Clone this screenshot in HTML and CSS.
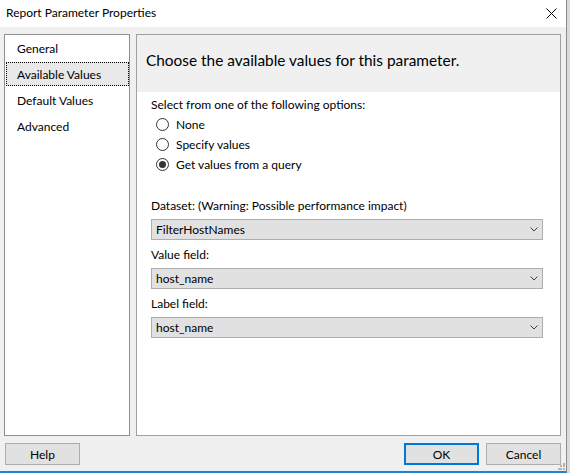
FILE: index.html
```html
<!DOCTYPE html>
<html>
<head>
<meta charset="utf-8">
<link rel="stylesheet" href="styles.css">
</head>
<body>
<div class="window">
  <div class="titlebar">
    <span class="title">Report Parameter Properties</span>
    <svg class="close" width="11" height="11" viewBox="0 0 11 11"><path d="M0.5 0.5 L10.5 10.5 M10.5 0.5 L0.5 10.5" stroke="#000" stroke-width="1" fill="none"/></svg>
  </div>
  <div class="main">
    <ul class="nav">
      <li class="nav-item">General</li>
      <li class="nav-item selected">Available Values</li>
      <li class="nav-item">Default Values</li>
      <li class="nav-item">Advanced</li>
    </ul>
    <section class="panel">
      <div class="panel-head">Choose the available values for this parameter.</div>
      <div class="panel-body">
        <div class="prompt">Select from one of the following options:</div>
        <div class="radios">
          <div class="radio"><span class="circle"></span><span>None</span></div>
          <div class="radio"><span class="circle"></span><span>Specify values</span></div>
          <div class="radio"><span class="circle checked"></span><span>Get values from a query</span></div>
        </div>
        <div class="field first">
          <div class="label">Dataset: (Warning: Possible performance impact)</div>
          <div class="select"><span>FilterHostNames</span><svg class="chev" width="8" height="5" viewBox="0 0 8 5"><path d="M0.5 0.5 L4 4 L7.5 0.5" stroke="#404040" stroke-width="1" fill="none"/></svg></div>
        </div>
        <div class="field">
          <div class="label">Value field:</div>
          <div class="select"><span>host_name</span><svg class="chev" width="8" height="5" viewBox="0 0 8 5"><path d="M0.5 0.5 L4 4 L7.5 0.5" stroke="#404040" stroke-width="1" fill="none"/></svg></div>
        </div>
        <div class="field">
          <div class="label">Label field:</div>
          <div class="select"><span>host_name</span><svg class="chev" width="8" height="5" viewBox="0 0 8 5"><path d="M0.5 0.5 L4 4 L7.5 0.5" stroke="#404040" stroke-width="1" fill="none"/></svg></div>
        </div>
      </div>
    </section>
  </div>
  <div class="buttons">
    <button class="btn">Help</button>
    <span class="spacer"></span>
    <button class="btn default">OK</button>
    <button class="btn">Cancel</button>
  </div>
  <svg class="grip" width="7" height="7" viewBox="0 0 7 7">
    <rect x="5" y="0" width="2" height="2" fill="#b5b5b5"/>
    <rect x="2" y="2" width="2" height="2" fill="#b5b5b5"/>
    <rect x="5" y="2" width="2" height="2" fill="#b5b5b5"/>
    <rect x="0" y="5" width="2" height="2" fill="#b5b5b5"/>
    <rect x="2" y="5" width="2" height="2" fill="#b5b5b5"/>
    <rect x="5" y="5" width="2" height="2" fill="#b5b5b5"/>
  </svg>
</div>
</body>
</html>
```
FILE: styles.css
```css
* { box-sizing: border-box; }
html, body {
  margin: 0;
  padding: 0;
  background: #dadada;
}
body {
  font-family: "Lato", "Open Sans", sans-serif;
  font-size: 12px;
  color: #000;
  width: 570px;
  height: 473px;
  overflow: hidden;
}
.window {
  position: relative;
  width: 567px;
  height: 473px;
  background: #f0f0f0;
  border-right: 1px solid #8c8c8c;
  border-bottom: 2px solid #1883d7;
  display: flex;
  flex-direction: column;
}
.titlebar {
  height: 27px;
  background: #fff;
  display: flex;
  align-items: center;
  padding-left: 6px;
  padding-right: 9px;
  flex-shrink: 0;
}
.title {
  flex: 1;
  font-size: 12px;
  line-height: 16px;
  padding-bottom: 1px;
}
.close { display: block; margin-bottom: 1px; }
.main {
  display: flex;
  gap: 6px;
  padding: 7px 5px 0 4px;
  height: 409px;
  flex-shrink: 0;
}
.nav {
  list-style: none;
  margin: 0;
  width: 126px;
  height: 402px;
  background: #fff;
  border: 1px solid #8f8f8f;
  padding: 1px 0 0 1px;
}
.nav-item {
  height: 24px;
  line-height: 21px;
  padding-top: 1px;
  margin-bottom: 2px;
  padding-left: 10px;
  border: 1px solid transparent;
}
.nav-item.selected {
  background: #e8e8e8;
  border: 1px dotted #000;
}
.panel {
  flex: 1;
  height: 402px;
  background: #fff;
  border: 1px solid #a0a0a0;
  display: flex;
  flex-direction: column;
}
.panel-head {
  height: 57px;
  background: #f0f0f0;
  padding: 15px 0 0 9px;
  font-size: 15.4px;
  line-height: 20px;
}
.panel-body {
  padding: 3px 17px 0 14px;
}
.prompt { line-height: 20px; }
.radios { display: flex; flex-direction: column; }
.radio {
  height: 20px;
  display: flex;
  align-items: center;
  padding-left: 5px;
  padding-bottom: 1px;
  gap: 7px;
}
.circle {
  width: 13px;
  height: 13px;
  border: 1px solid #333;
  border-radius: 50%;
  background: #fff;
  display: flex;
  align-items: center;
  justify-content: center;
}
.circle.checked::after {
  content: "";
  width: 7px;
  height: 7px;
  border-radius: 50%;
  background: #333;
}
.field { margin-top: 5px; }
.field.first { margin-top: 21px; }
.label { line-height: 20px; }
.select {
  margin-top: 3px;
  height: 21px;
  background: #e1e1e1;
  border: 1px solid #adadad;
  padding: 0 4px;
  display: flex;
  align-items: center;
  justify-content: space-between;
  line-height: 19px;
}
.chev { display: block; }
.buttons {
  display: flex;
  padding: 7px 5px 0 5px;
  gap: 7px;
}
.spacer { flex: 1; }
.btn {
  width: 75px;
  height: 22px;
  background: #e1e1e1;
  border: 1px solid #adadad;
  font-family: inherit;
  font-size: 12px;
  color: #000;
  padding: 0;
  margin: 0;
}
.btn.default { border: 2px solid #0078d7; }
.grip {
  position: absolute;
  right: 1px;
  bottom: 1px;
}
```
